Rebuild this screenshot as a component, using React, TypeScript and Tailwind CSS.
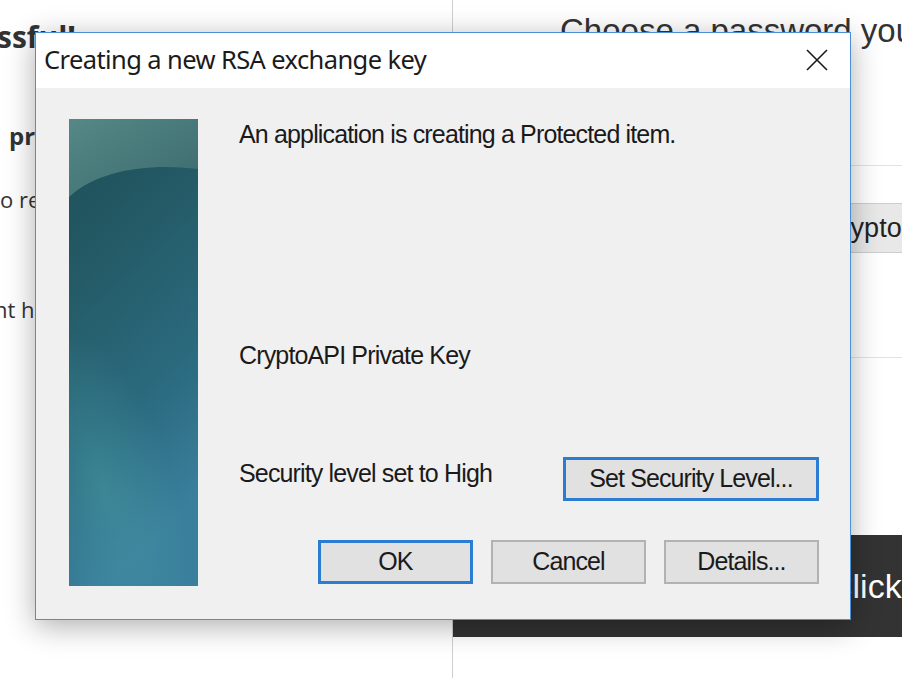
const sans = "font-['Liberation_Sans',Arial,sans-serif]";

function KeyArt() {
  return (
    <svg width="129" height="467" viewBox="0 0 129 467" className="shrink-0">
      <defs>
        <linearGradient id="base" x1="0" y1="0" x2="0.25" y2="1">
          <stop offset="0" stopColor="#1d4e56" />
          <stop offset="0.35" stopColor="#245b67" />
          <stop offset="0.7" stopColor="#2b6a7f" />
          <stop offset="1" stopColor="#3a809d" />
        </linearGradient>
        <linearGradient id="cap" x1="0" y1="0" x2="1" y2="1">
          <stop offset="0" stopColor="#568887" />
          <stop offset="1" stopColor="#3b6a6d" />
        </linearGradient>
        <radialGradient id="glow" cx="0.5" cy="0.5" r="0.5">
          <stop offset="0" stopColor="#4a9ea3" stopOpacity="0.45" />
          <stop offset="1" stopColor="#4a9ea3" stopOpacity="0" />
        </radialGradient>
      </defs>
      <rect width="129" height="467" fill="url(#base)" />
      <ellipse cx="35" cy="370" rx="70" ry="170" fill="url(#glow)" transform="rotate(-18 35 370)" />
      <path d="M0 0H129V50C82 44 30 50 0 78Z" fill="url(#cap)" />
    </svg>
  );
}

function WinButton({ label, primary, width }: { label: string; primary?: boolean; width: string }) {
  return (
    <button
      type="button"
      className={
        primary
          ? `${width} flex h-[44px] items-center justify-center border-[3px] border-[#2c7dd1] bg-[#e1e1e1] text-[25px] tracking-[-0.9px] text-[#1a1a1a]`
          : `${width} flex h-[44px] items-center justify-center border-2 border-[#b2b2b2] bg-[#e1e1e1] text-[25px] tracking-[-0.9px] text-[#1a1a1a]`
      }
    >
      {label}
    </button>
  );
}

export default function App() {
  return (
    <div className="relative flex h-[678px] w-[902px] overflow-hidden bg-white">
      {/* page behind the dialog */}
      <div className="w-[453px] shrink-0 overflow-hidden whitespace-nowrap border-r border-[#cfcfcf] font-['Open_Sans',sans-serif] text-[#333]">
        <div className="-ml-[3px] mt-[17px] text-[30px] font-bold leading-[40px]">ssful!</div>
        <div className="ml-[9px] mt-[63px] text-[24px] font-bold leading-[32px]">private key</div>
        <div className="mt-[32px] text-[22px] leading-[30px]">o reuse this key</div>
        <div className="-ml-[6px] mt-[80px] text-[22px] leading-[30px]">nt have a copy</div>
      </div>
      <div className={`min-w-0 flex-1 overflow-hidden whitespace-nowrap ${sans}`}>
        <div className="ml-[107px] mt-[14px] text-[33px] leading-[33px] text-[#333]">Choose a password you will remember</div>
        <div className="mt-[118px] h-px bg-[#e3e3e3]" />
        <div className="ml-[107px] mt-[37px] flex h-[50px] items-center border-y border-[#cdcdcd] bg-[#e8e8e8] pl-[16px] text-[27px] text-[#222]">
          Microsoft Enhanced Cryptographic Provider v1.0
        </div>
        <div className="mt-[104px] h-px bg-[#e3e3e3]" />
        <div className="mt-[177px] flex h-[102px] items-center bg-[#333] pl-[375px] text-[34px] text-white">Click here</div>
      </div>

      {/* dialog window */}
      <div className="absolute left-[35px] top-[32px] flex h-[588px] w-[816px] flex-col border border-[#4a8fd8] bg-[#f0f0f0] shadow-[0_6px_28px_rgba(0,0,0,0.32)]">
        <div className="flex h-[55px] shrink-0 items-center justify-between bg-white pl-[8px] pr-[22px]">
          <span className="-mt-[2px] font-['Noto_Sans',sans-serif] text-[25.5px] tracking-[-0.6px] text-[#1b1b1b]">
            Creating a new RSA exchange key
          </span>
          <svg width="22" height="22" viewBox="0 0 22 22" className="-mt-[2px]">
            <path d="M1 1L21 21M21 1L1 21" stroke="#1a1a1a" strokeWidth="1.6" />
          </svg>
        </div>
        <div className="flex flex-1 pl-[33px] pr-[31px] pt-[31px]">
          <KeyArt />
          <div className={`ml-[41px] flex flex-1 flex-col text-[25px] tracking-[-0.85px] text-[#1a1a1a] ${sans}`}>
            <p className="mt-px leading-[28px]">An application is creating a Protected item.</p>
            <p className="mt-[193px] leading-[28px]">CryptoAPI Private Key</p>
            <div className="mt-[88px] flex items-start justify-between">
              <p className="mt-[2px] leading-[28px]">Security level set to High</p>
              <WinButton label="Set Security Level..." primary width="w-[256px]" />
            </div>
            <div className="mt-[39px] flex justify-end gap-[18px]">
              <WinButton label="OK" primary width="w-[155px]" />
              <WinButton label="Cancel" width="w-[155px]" />
              <WinButton label="Details..." width="w-[155px]" />
            </div>
          </div>
        </div>
      </div>
    </div>
  );
}
